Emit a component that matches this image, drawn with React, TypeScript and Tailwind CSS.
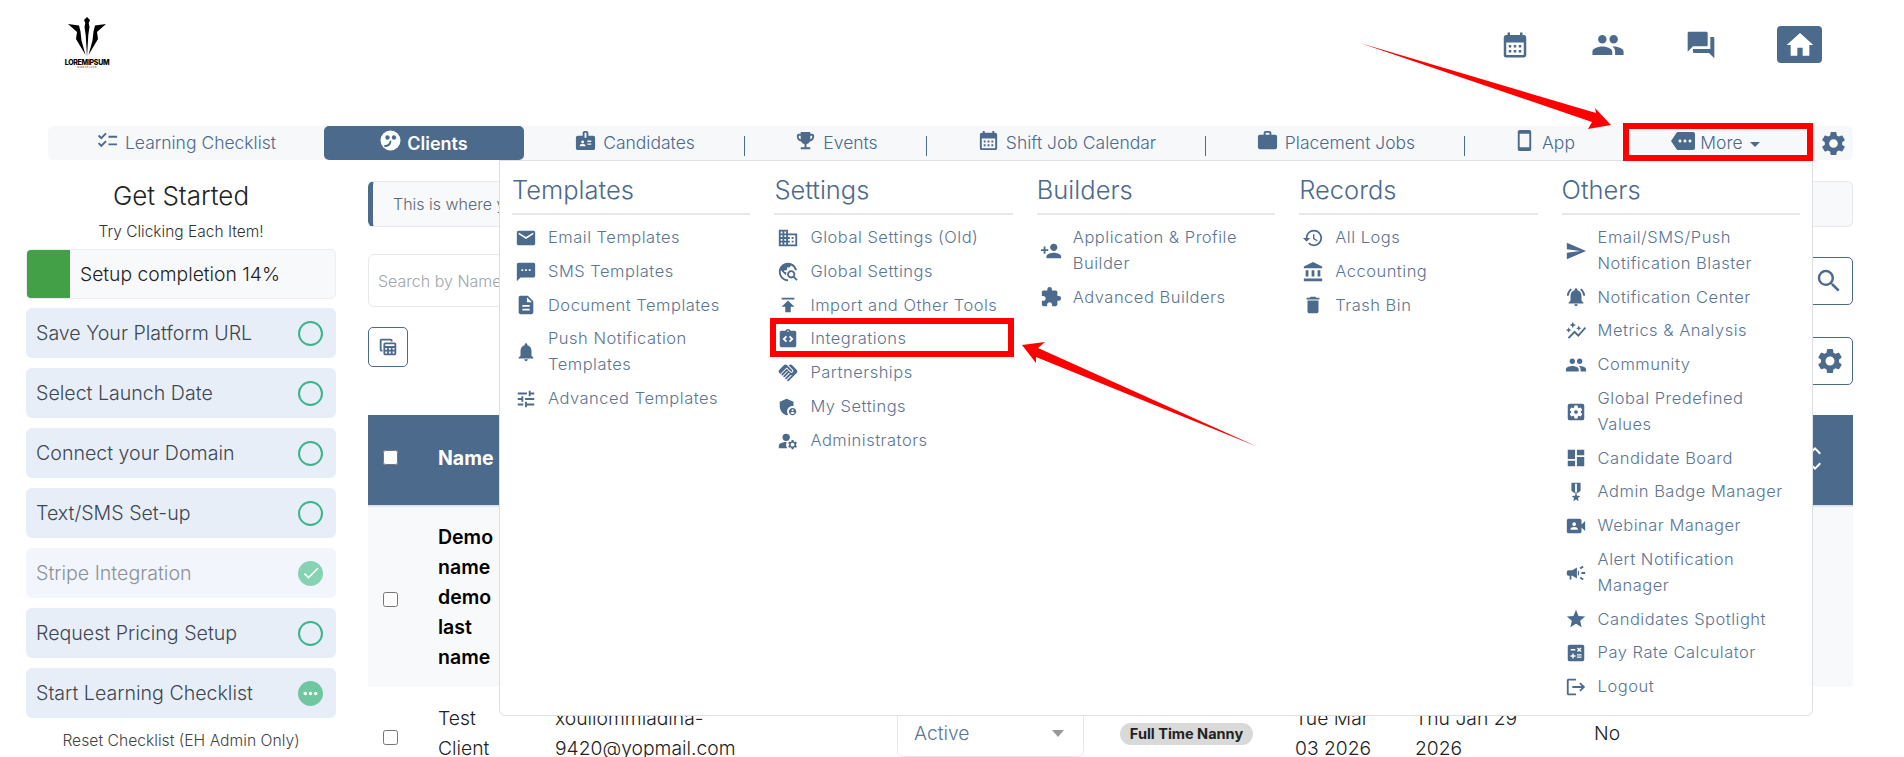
import React from "react";
import {
  MdEmail, MdSms, MdDescription, MdNotifications, MdTune, MdDomain, MdTravelExplore, MdPublish,
  MdIntegrationInstructions, MdHandshake, MdAdminPanelSettings, MdManageAccounts, MdPersonAdd, MdExtension,
  MdHistory, MdAccountBalance, MdDelete, MdSend, MdNotificationsActive, MdAutoGraph, MdPeople,
  MdSettingsApplications, MdDashboard, MdMilitaryTech, MdVideoCameraFront, MdCampaign, MdStar, MdCalculate,
  MdLogout, MdChecklist, MdBadge, MdEmojiEvents, MdCalendarMonth, MdWork, MdSmartphone, MdMore,
  MdArrowDropDown, MdSettings, MdQuestionAnswer, MdHome, MdTableView, MdSearch, MdCheck, MdMoreHoriz,
  MdExpandLess, MdExpandMore,
} from "react-icons/md";

type Item = { icon: React.ComponentType<{ size?: number; className?: string }>; label: string };

const columns: { title: string; items: Item[] }[] = [
  {
    title: "Templates",
    items: [
      { icon: MdEmail, label: "Email Templates" },
      { icon: MdSms, label: "SMS Templates" },
      { icon: MdDescription, label: "Document Templates" },
      { icon: MdNotifications, label: "Push Notification\nTemplates" },
      { icon: MdTune, label: "Advanced Templates" },
    ],
  },
  {
    title: "Settings",
    items: [
      { icon: MdDomain, label: "Global Settings (Old)" },
      { icon: MdTravelExplore, label: "Global Settings" },
      { icon: MdPublish, label: "Import and Other Tools" },
      { icon: MdIntegrationInstructions, label: "Integrations" },
      { icon: MdHandshake, label: "Partnerships" },
      { icon: MdAdminPanelSettings, label: "My Settings" },
      { icon: MdManageAccounts, label: "Administrators" },
    ],
  },
  {
    title: "Builders",
    items: [
      { icon: MdPersonAdd, label: "Application & Profile\nBuilder" },
      { icon: MdExtension, label: "Advanced Builders" },
    ],
  },
  {
    title: "Records",
    items: [
      { icon: MdHistory, label: "All Logs" },
      { icon: MdAccountBalance, label: "Accounting" },
      { icon: MdDelete, label: "Trash Bin" },
    ],
  },
  {
    title: "Others",
    items: [
      { icon: MdSend, label: "Email/SMS/Push\nNotification Blaster" },
      { icon: MdNotificationsActive, label: "Notification Center" },
      { icon: MdAutoGraph, label: "Metrics & Analysis" },
      { icon: MdPeople, label: "Community" },
      { icon: MdSettingsApplications, label: "Global Predefined\nValues" },
      { icon: MdDashboard, label: "Candidate Board" },
      { icon: MdMilitaryTech, label: "Admin Badge Manager" },
      { icon: MdVideoCameraFront, label: "Webinar Manager" },
      { icon: MdCampaign, label: "Alert Notification\nManager" },
      { icon: MdStar, label: "Candidates Spotlight" },
      { icon: MdCalculate, label: "Pay Rate Calculator" },
      { icon: MdLogout, label: "Logout" },
    ],
  },
];

function NavCell({ w, icon: Icon, label, sep }: { w: string; icon: Item["icon"]; label: string; sep?: boolean }) {
  return (
    <div className={`${w} relative flex items-center justify-center gap-[6px] text-[17.5px] font-light text-[#4c6a8c]`}>
      <Icon size={23} className="-mt-[5px] shrink-0" />
      <span className="mt-[1px]">{label}</span>
      {sep && <span className="absolute right-0 top-[7px] h-[20px] w-px bg-[#4c6a8c]" />}
    </div>
  );
}

function Step({ label, state }: { label: string; state: "open" | "done" | "busy" }) {
  return (
    <div
      className={`flex h-[50px] items-center justify-between rounded-[6px] pl-[10px] pr-[13px] text-[19.6px] font-light ${
        state === "done" ? "bg-[#f2f5fc] text-[#8b9198]" : "bg-[#e8eef8] text-[#3d4752]"
      }`}
    >
      <span className="mt-[1px]">{label}</span>
      {state === "open" && <span className="h-[25px] w-[25px] rounded-full border-[2.5px] border-[#3cb48a]" />}
      {state === "done" && (
        <span className="flex h-[25px] w-[25px] items-center justify-center rounded-full bg-[#85d3b2] text-white">
          <MdCheck size={20} />
        </span>
      )}
      {state === "busy" && (
        <span className="flex h-[25px] w-[25px] items-center justify-center rounded-full bg-[#6fc7a2] text-white">
          <MdMoreHoriz size={21} />
        </span>
      )}
    </div>
  );
}

function Logo() {
  return (
    <div className="flex w-[44px] flex-col items-center">
      <svg width="38" height="41" viewBox="0 0 38 41" fill="#000">
        <path d="M19 0l3 3-1.300 3 .8 4-1.200 8L19 40l-1.300-22-1.200-8 .8-4L16 3z" />
        <path d="M0 7l11 1.500 1.500 6 1 9L17.500 38 8 22 9 15z" />
        <path d="M38 7l-11 1.500-1.500 6-1 9L20.500 38 30 22 29 15z" />
      </svg>
      <span className="mt-[1px] text-[7px] font-extrabold leading-[7px] tracking-[-0.3px] text-black">LOREMIPSUM</span>
      <span className="text-[2.5px] leading-[3px] tracking-[0.5px] text-[#333]">WORKPLACE</span>
    </div>
  );
}

function FaceIcon() {
  return (
    <svg width="21" height="21" viewBox="0 0 21 21" className="-mt-[5px] shrink-0">
      <circle cx="10.500" cy="10.500" r="10" fill="#fff" />
      <circle cx="7.500" cy="7.500" r="2.200" fill="#4c6a8c" />
      <circle cx="14" cy="7.500" r="2.200" fill="#4c6a8c" />
      <path d="M5 16c3 0 5-1.500 5.500-4.500" fill="none" stroke="#4c6a8c" strokeWidth="1.800" strokeLinecap="round" />
    </svg>
  );
}

export default function App() {
  return (
    <div className="relative h-[757px] w-[1904px] overflow-hidden bg-white font-['Inter',sans-serif] text-[#333]">
      <header className="flex h-[126px] justify-between pl-[65px] pr-[82px] pt-[17px]">
        <Logo />
        <div className="mt-[9px] flex h-[37px] items-center text-[#4c6a8c]">
          <MdCalendarMonth size={30} />
          <MdPeople size={34} className="ml-[61px]" />
          <MdQuestionAnswer size={32} className="ml-[60px]" />
          <span className="ml-[60px] flex h-[37px] w-[45px] items-center justify-center rounded-[4px] bg-[#4c6a8c] text-white">
            <MdHome size={32} />
          </span>
        </div>
      </header>

      <nav className="ml-[48px] flex h-[34px] w-[1805px] items-center rounded-[6px] bg-[#f7f8fa]">
        <NavCell w="w-[276px]" icon={MdChecklist} label="Learning Checklist" />
        <div className="flex h-[34px] w-[200px] items-center justify-center gap-[6px] rounded-[5px] bg-[#4c6a8c] text-[18px] font-semibold text-white">
          <FaceIcon />
          <span className="mt-[1px]">Clients</span>
        </div>
        <NavCell w="w-[221px]" icon={MdBadge} label="Candidates" sep />
        <NavCell w="w-[182px]" icon={MdEmojiEvents} label="Events" sep />
        <NavCell w="w-[279px]" icon={MdCalendarMonth} label="Shift Job Calendar" sep />
        <NavCell w="w-[259px]" icon={MdWork} label="Placement Jobs" sep />
        <NavCell w="w-[158px]" icon={MdSmartphone} label="App" />
        <div className="flex w-[190px] items-center justify-center pl-[2px] text-[17.5px] font-light text-[#4c6a8c]">
          <MdMore size={24} className="mr-[5px] -mt-[5px]" />
          <span className="mt-[1px]">More</span>
          <MdArrowDropDown size={24} className="mt-[2px]" />
        </div>
        <div className="flex flex-1 justify-center text-[#4c6a8c]">
          <MdSettings size={29} />
        </div>
      </nav>

      <div className="flex pl-[26px]">
        <aside className="mr-[32px] mt-[21px] w-[310px] shrink-0">
          <h2 className="text-center text-[26px] font-light leading-[29px] text-[#222]">Get Started</h2>
          <p className="mt-[10px] text-center text-[15.500px] font-light leading-[24px] text-[#333]">Try Clicking Each Item!</p>
          <div className="mt-[5px] flex h-[50px] items-center overflow-hidden rounded-[5px] border border-[#eceef1] bg-[#f8f9fb]">
            <div className="h-full w-[43px] bg-[#43a047]" />
            <span className="ml-[10px] text-[19.300px] font-light text-[#222]">Setup completion 14%</span>
          </div>
          <div className="mt-[9px] flex flex-col gap-[10px]">
            <Step label="Save Your Platform URL" state="open" />
            <Step label="Select Launch Date" state="open" />
            <Step label="Connect your Domain" state="open" />
            <Step label="Text/SMS Set-up" state="open" />
            <Step label="Stripe Integration" state="done" />
            <Step label="Request Pricing Setup" state="open" />
            <Step label="Start Learning Checklist" state="busy" />
          </div>
          <p className="mt-[11px] text-center text-[15.700px] font-light leading-[24px] text-[#444]">Reset Checklist (EH Admin Only)</p>
        </aside>

        <main className="mt-[21px] w-[1485px] shrink-0">
          <div className="flex h-[46px] items-center rounded-[6px] border border-[#e6e8ec] border-l-[5px] border-l-[#4c6a8c] bg-[#f8f9fb] pl-[20px] text-[16px] font-light text-[#5c6773]">
            This is where you can manage all of your clients
          </div>

          <div className="mt-[27px] flex h-[53px] items-center gap-[12px]">
            <div className="flex h-[53px] flex-1 items-center rounded-[6px] border border-[#e6e8ec] pl-[9px] text-[16px] font-light text-[#a2a6ab]">
              Search by Name
            </div>
            <span className="flex h-[48px] w-[60px] items-center justify-end rounded-[5px] border border-[#4c6a8c] pr-[8px] text-[#4c6a8c]">
              <MdSearch size={30} />
            </span>
          </div>

          <div className="mt-[20px] flex h-[58px] items-start justify-between">
            <span className="flex h-[40px] w-[40px] items-center justify-center rounded-[5px] border border-[#4c6a8c] text-[#4c6a8c]">
              <MdTableView size={22} />
            </span>
            <span className="mt-[10px] flex h-[48px] w-[60px] items-center justify-end rounded-[5px] border border-[#4c6a8c] pr-[7px] text-[#4c6a8c]">
              <MdSettings size={30} />
            </span>
          </div>

          <div className="mt-[30px]">
            <div className="flex h-[92px] items-center border-b-2 border-[#dee5ee] bg-[#4c6a8c] text-[19.500px] font-bold text-white">
              <div className="flex w-[70px] -mt-[5px] pl-[15px]">
                <input type="checkbox" readOnly className="h-[15px] w-[15px]" />
              </div>
              <span className="-mt-[3px]">Name</span>
              <span className="ml-auto mr-[26px] flex flex-col -mt-[4px]">
                <MdExpandLess size={24} className="-mb-[9px]" />
                <MdExpandMore size={24} />
              </span>
            </div>
            <div className="flex h-[180px] items-center bg-[#f8f9fb] text-[19.500px]">
              <div className="flex w-[70px] pl-[15px] pt-[5px]">
                <input type="checkbox" readOnly className="h-[15px] w-[15px]" />
              </div>
              <div className="w-[100px] font-semibold leading-[30px] text-black">
                Demo<br />name<br />demo<br />last<br />name
              </div>
            </div>
            <div className="flex items-start pt-[16px] text-[19.300px] font-light leading-[30px] text-[#222]">
              <div className="flex h-[60px] w-[70px] items-center pl-[15px] pt-[8px]">
                <input type="checkbox" readOnly className="h-[15px] w-[15px]" />
              </div>
              <div className="w-[117px]">Test<br />Client</div>
              <div className="w-[342px]">xouliommiadina-<br />9420@yopmail.com</div>
              <div className="mt-[6px] flex h-[48px] w-[187px] items-center justify-between rounded-[6px] border border-[#e6e8ec] pl-[16px] pr-[19px] text-[#5b7593]">
                Active
                <span className="h-0 w-0 border-x-[6px] border-t-[7px] border-x-transparent border-t-[#999]" />
              </div>
              <div className="ml-[36px] w-[175px]">
                <span className="mt-[20px] flex h-[22px] w-[133px] items-center justify-center rounded-full bg-[#d9d9d9] text-[14.500px] font-bold text-[#222]">
                  Full Time Nanny
                </span>
              </div>
              <div className="w-[120px]">Tue Mar<br />03 2026</div>
              <div className="w-[179px]">Thu Jan 29<br />2026</div>
              <div className="mt-[15px]">No</div>
            </div>
          </div>
        </main>
      </div>

      {/* dropdown panel */}
      <div className="absolute left-[499px] top-[160px] grid h-[556px] w-[1314px] grid-cols-5 rounded-b-[6px] border border-[#dcdfe3] bg-white">
        {columns.map((col) => (
          <div key={col.title} className="px-[12px]">
            <h3 className="h-[54px] border-b-2 border-[#e6e8eb] pt-[11px] text-[25.500px] font-light leading-[36px] text-[#4c6a8c]">
              {col.title}
            </h3>
            <ul className="mt-[6px]">
              {col.items.map(({ icon: Icon, label }) => (
                <li key={label} className="flex items-center py-[4px] text-[16.500px] font-light leading-[25.800px] tracking-[0.5px] text-[#5b7593]">
                  <span className="flex w-[36px] shrink-0 justify-center pr-[8px] text-[#4c6a8c]">
                    <Icon size={22} />
                  </span>
                  <span className="whitespace-pre-line">{label}</span>
                </li>
              ))}
            </ul>
          </div>
        ))}
      </div>

      {/* annotations */}
      <div className="absolute left-[1623px] top-[123px] h-[38px] w-[190px] border-[6px] border-[#ff0000]" />
      <div className="absolute left-[770px] top-[318px] h-[39px] w-[244px] border-[6px] border-[#ff0000]" />
      <svg className="pointer-events-none absolute left-0 top-0" width="1904" height="757">
        <polygon fill="#ff0000" points="1360,43 1596,113 1595,108 1611,125 1588,129 1592,122" />
        <polygon fill="#ff0000" points="1258,447 1036,357 1036,363 1022,345 1045,342 1038,348" />
      </svg>
    </div>
  );
}
